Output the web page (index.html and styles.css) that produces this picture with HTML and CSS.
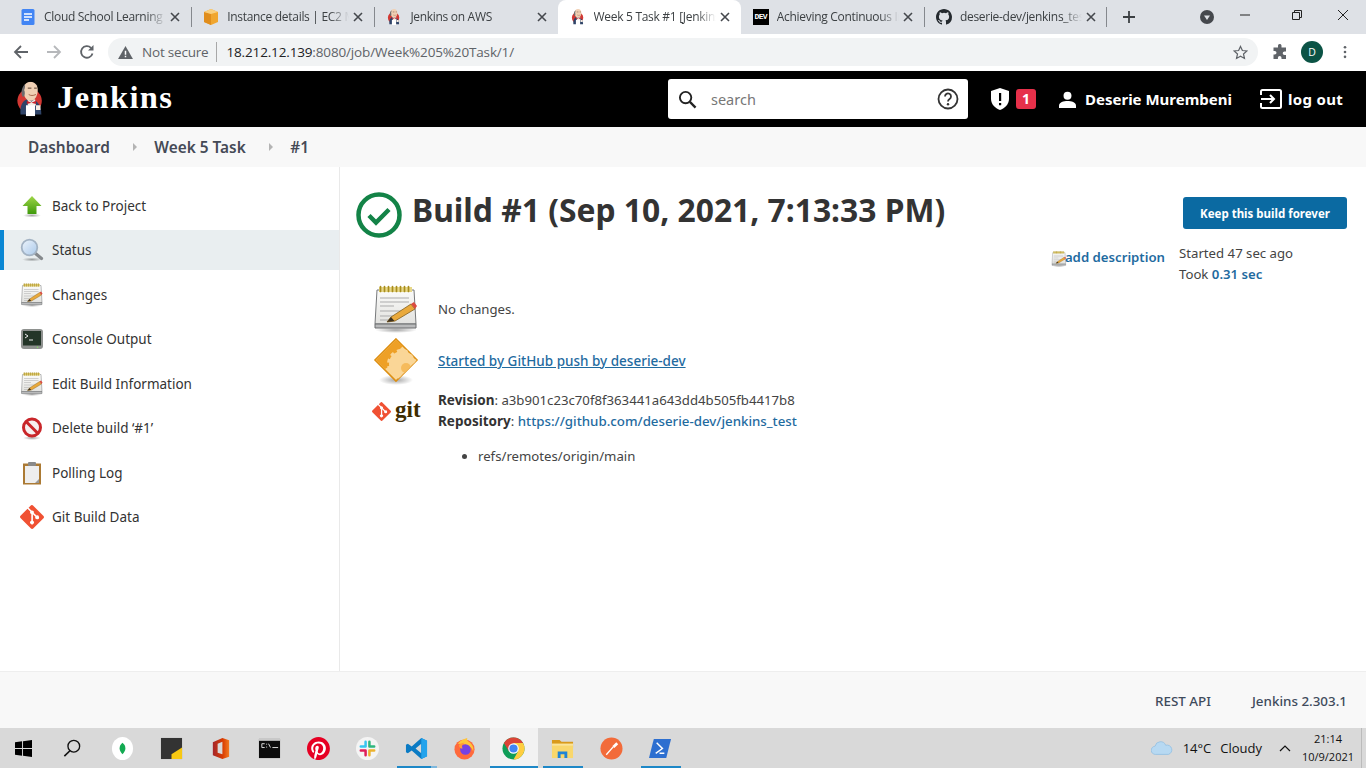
FILE: index.html
```html
<!DOCTYPE html>
<html lang="en">
<head>
<meta charset="utf-8">
<title>Week 5 Task #1 [Jenkins]</title>
<link rel="stylesheet" href="styles.css">
</head>
<body>
<svg class="defs" width="0" height="0" aria-hidden="true">
  <defs>
    <linearGradient id="paper" x1="0" y1="0" x2="0" y2="1"><stop offset="0" stop-color="#fbfbfa"/><stop offset="1" stop-color="#e2e2df"/></linearGradient>
    <linearGradient id="arrow" x1="0" y1="0" x2="0" y2="1"><stop offset="0" stop-color="#9fd648"/><stop offset="1" stop-color="#3f9a0c"/></linearGradient>
    <linearGradient id="lens" x1="0" y1="0" x2="1" y2="1"><stop offset="0" stop-color="#eef5fc"/><stop offset="1" stop-color="#a9c8ea"/></linearGradient>
    <linearGradient id="office" x1="0" y1="0" x2="1" y2="0"><stop offset="0" stop-color="#a4262c"/><stop offset=".6" stop-color="#d83b01"/><stop offset="1" stop-color="#f27a21"/></linearGradient>
    <radialGradient id="shade"><stop offset="0" stop-color="#000" stop-opacity=".35"/><stop offset="1" stop-color="#000" stop-opacity="0"/></radialGradient>
    <clipPath id="dia"><path d="M24 2l21 21-21 21L3 23z"/></clipPath>
    <symbol id="butler" viewBox="0 0 32 38">
      <circle cx="15" cy="21" r="13.500" fill="#d33833"/>
      <path d="M5 36c-1-9 2-17 10-17s13 7 13 17z" fill="#2f4468"/>
      <path d="M13 19l4 3 4-3 1 7-5 3-4-3z" fill="#f4efe6"/>
      <path d="M12 21l5 2 5-2v3.500l-5-1.500-5 1.500z" fill="#c8202a"/>
      <path d="M8 9c0-5 3-9 8-9s8 4 8 9c0 6-3 12-8 12s-8-6-8-12z" fill="#f0d0b4"/>
      <path d="M7 16C5 11 7 5 10 3c0 3 0 4-1 6 1 2 1 5 0 7-1 1-1 1-2 0z" fill="#6d6b6d"/>
      <path d="M13 7h4M20 7h3" stroke="#5a4030" stroke-width="1.100"/>
      <path d="M14 14c2 1.500 5 1.500 8 0" stroke="#a86a50" stroke-width="1.100" fill="none"/>
      <path d="M11 26h10v12H11z" fill="#fff"/>
      <path d="M22 26h5v5h-5z" fill="#f6ede2"/>
    </symbol>
    <symbol id="notepad" viewBox="0 0 48 48">
      <ellipse cx="24" cy="45" rx="21" ry="3" fill="url(#shade)"/>
      <path d="M5 5h37l2 34H3z" fill="url(#paper)" stroke="#77797b"/>
      <path d="M3 39h41v4H3z" fill="#b9babb" stroke="#6b6d6f"/>
      <path d="M7 2h33v5H7z" fill="#e8d888"/>
      <path d="M8.500 1.500v5M12.500 1.500v5M16.500 1.500v5M20.500 1.500v5M24.500 1.500v5M28.500 1.500v5M32.500 1.500v5M36.500 1.500v5" stroke="#a88d1e" stroke-width="1.700" stroke-linecap="round"/>
      <path d="M8 13h29M8 17h29M8 21h14M8 26h24M8 31h17M8 35h10" stroke="#ababab"/>
      <path d="M15 37l4-5 20-13 4 5-20 12z" fill="#e9a93c" stroke="#82601f" stroke-width=".8"/>
      <path d="M39 19l3-2 3 4-2 3z" fill="#dc4b40"/>
      <path d="M15 37l4-5 3.500 4z" fill="#3f3320"/>
    </symbol>
    <symbol id="gitmark" viewBox="0 0 24 24">
      <path d="M23.500 11 13 .5a1.600 1.600 0 0 0-2.200 0L8.600 2.700l2.800 2.800a1.900 1.900 0 0 1 2.400 2.400l2.700 2.700a1.900 1.900 0 1 1-1.100 1.100L12.900 9.200v6.600a1.900 1.900 0 1 1-1.600-.1V9a1.900 1.900 0 0 1-1-2.500L7.500 3.800.5 10.800a1.600 1.600 0 0 0 0 2.200L11 23.500a1.600 1.600 0 0 0 2.200 0l10.300-10.300a1.600 1.600 0 0 0 0-2.200z" fill="#f05133"/>
    </symbol>
    <symbol id="close" viewBox="0 0 10 10">
      <path d="M1 1l8 8M9 1l-8 8" stroke="#45484d" stroke-width="1.600" fill="none"/>
    </symbol>
  </defs>
</svg>

<div class="tabstrip">
  <div class="tab">
    <svg class="favicon" viewBox="0 0 16 16"><rect x="1.500" width="13" height="16" rx="1.500" fill="#4285f4"/><path d="M4 5h8M4 8h8M4 11h5" stroke="#fff" stroke-width="1.300"/></svg>
    <span class="tab-title">Cloud School Learning Management</span>
    <svg class="tab-x"><use href="#close"/></svg>
  </div>
  <div class="tab sep">
    <svg class="favicon" viewBox="0 0 16 16"><path d="M8 0l7 3v10l-7 3-7-3V3z" fill="#f0a62f"/><path d="M8 5L1 3v10l7 3z" fill="#e08d1c"/><path d="M8 5l7-2-7-3-7 3z" fill="#f9cf7e"/></svg>
    <span class="tab-title">Instance details | EC2 Management Console</span>
    <svg class="tab-x"><use href="#close"/></svg>
  </div>
  <div class="tab sep">
    <svg class="favicon" viewBox="0 0 32 38"><use href="#butler"/></svg>
    <span class="tab-title">Jenkins on AWS</span>
    <svg class="tab-x"><use href="#close"/></svg>
  </div>
  <div class="tab active">
    <svg class="favicon" viewBox="0 0 32 38"><use href="#butler"/></svg>
    <span class="tab-title">Week 5 Task #1 [Jenkins]</span>
    <svg class="tab-x"><use href="#close"/></svg>
  </div>
  <div class="tab">
    <span class="favicon dev-icon">DEV</span>
    <span class="tab-title">Achieving Continuous Integration</span>
    <svg class="tab-x"><use href="#close"/></svg>
  </div>
  <div class="tab sep sep-end">
    <svg class="favicon" viewBox="0 0 16 16"><path fill="#24292e" d="M8 0C3.580 0 0 3.580 0 8c0 3.540 2.290 6.530 5.470 7.590.4.070.55-.17.55-.38 0-.19-.01-.82-.01-1.490-2.010.37-2.530-.49-2.690-.94-.09-.23-.48-.94-.82-1.130-.28-.15-.68-.52-.01-.53.63-.01 1.080.58 1.230.82.72 1.210 1.870.87 2.330.66.070-.52.280-.87.510-1.070-1.780-.2-3.640-.89-3.640-3.950 0-.87.310-1.590.820-2.150-.080-.2-.360-1.020.080-2.120 0 0 .670-.21 2.200.82a7.400 7.400 0 0 1 4 0c1.530-1.040 2.200-.82 2.200-.82.440 1.100.160 1.920.080 2.120.510.560.820 1.270.820 2.150 0 3.070-1.870 3.750-3.650 3.950.290.250.540.730.540 1.480 0 1.070-.010 1.930-.010 2.200 0 .210.150.460.550.380A8.010 8.010 0 0 0 16 8c0-4.420-3.580-8-8-8z"/></svg>
    <span class="tab-title">deserie-dev/jenkins_test</span>
    <svg class="tab-x"><use href="#close"/></svg>
  </div>
  <svg class="newtab" viewBox="0 0 14 14"><path d="M7 1v12M1 7h12" stroke="#3c4043" stroke-width="1.800"/></svg>
  <div class="strip-spacer"></div>
  <svg class="profile-dot" viewBox="0 0 16 16"><circle cx="8" cy="8" r="7" fill="#45484d"/><path d="M5 6.500h6L8 11z" fill="#dee1e6"/></svg>
  <div class="winctl">
    <svg viewBox="0 0 12 12"><path d="M1 6h10" stroke="#222"/></svg>
    <svg viewBox="0 0 12 12"><path d="M1.500 3.500h7v7h-7zM3.500 3.500v-2h7v7h-2" fill="none" stroke="#222"/></svg>
    <svg viewBox="0 0 12 12"><path d="M1 1l10 10M11 1L1 11" stroke="#222"/></svg>
  </div>
</div>

<div class="toolbar">
  <svg class="nav-ic" viewBox="0 0 16 16"><path d="M15 8H2M8 2L2 8l6 6" fill="none" stroke="#5f6368" stroke-width="1.800"/></svg>
  <svg class="nav-ic" viewBox="0 0 16 16"><path d="M1 8h13M8 2l6 6-6 6" fill="none" stroke="#b6b8bb" stroke-width="1.800"/></svg>
  <svg class="nav-ic" viewBox="0 0 16 16"><path d="M13.500 9.500A5.800 5.800 0 1 1 12 3.800" fill="none" stroke="#5f6368" stroke-width="1.800"/><path d="M14.500 1v5.500H9z" fill="#5f6368"/></svg>
  <div class="omnibox">
    <svg class="warn" viewBox="0 0 16 14"><path d="M8 0l8 14H0z" fill="#5f6368"/><path d="M7.200 5h1.600v4.500H7.200zM7.200 10.500h1.600V12H7.200z" fill="#fff"/></svg>
    <span class="not-secure">Not secure</span>
    <span class="url"><b class="host">18.212.12.139</b>:8080/job/Week%205%20Task/1/</span>
    <svg class="star" viewBox="0 0 16 16"><path d="M8 1.500l2 4.400 4.800.5-3.600 3.200 1 4.700L8 11.900l-4.200 2.400 1-4.700L1.200 6.400 6 5.900z" fill="none" stroke="#5f6368" stroke-width="1.300"/></svg>
  </div>
  <svg class="ext" viewBox="0 0 16 16"><path d="M6 1.500a1.800 1.800 0 0 1 3.500 0V3.500H14v4h-1.500a1.800 1.800 0 0 0 0 3.600H14V15H9.500v-1.200a1.800 1.800 0 0 0-3.600 0V15H1.500v-4.500h1.200a1.800 1.800 0 0 0 0-3.600H1.500V3.500H6z" fill="#5f6368"/></svg>
  <span class="avatar">D</span>
  <svg class="kebab" viewBox="0 0 4 16"><circle cx="2" cy="2.500" r="1.500" fill="#5f6368"/><circle cx="2" cy="8" r="1.500" fill="#5f6368"/><circle cx="2" cy="13.500" r="1.500" fill="#5f6368"/></svg>
</div>

<header class="jk-header">
  <svg class="jk-logo" viewBox="0 0 32 38"><use href="#butler"/></svg>
  <span class="jk-name">Jenkins</span>
  <div class="jk-search">
    <svg class="search-ic" viewBox="0 0 20 20"><circle cx="8" cy="8" r="6" fill="none" stroke="#222" stroke-width="2"/><path d="M12.500 12.500L18.500 18.500" stroke="#222" stroke-width="2.400"/></svg>
    <span class="search-text">search</span>
    <svg class="help-ic" viewBox="0 0 22 22"><circle cx="11" cy="11" r="9.500" fill="none" stroke="#333" stroke-width="1.800"/><path d="M8 8.500a3 3 0 1 1 4.600 2.500c-1 .7-1.600 1.200-1.600 2.500" fill="none" stroke="#333" stroke-width="1.800"/><circle cx="11" cy="16.200" r="1.200" fill="#333"/></svg>
  </div>
  <svg class="shield" viewBox="0 0 18 22"><path d="M9 0l9 3v8c0 5-4 9-9 11-5-2-9-6-9-11V3z" fill="#fff"/><path d="M8 5h2.200v8H8zM8 15h2.200v2.200H8z" fill="#000"/></svg>
  <span class="badge">1</span>
  <svg class="user-ic" viewBox="0 0 18 18"><circle cx="9" cy="5" r="4.200" fill="#fff"/><path d="M0 18v-2.500C0 12 5 10.500 9 10.500s9 1.500 9 5V18z" fill="#fff"/></svg>
  <span class="jk-link user-name">Deserie Murembeni</span>
  <svg class="logout-ic" viewBox="0 0 22 20"><path d="M1 6V2.500A1.500 1.500 0 0 1 2.500 1h17A1.500 1.500 0 0 1 21 2.500v15a1.500 1.500 0 0 1-1.500 1.500h-17A1.500 1.500 0 0 1 1 17.500V14" fill="none" stroke="#fff" stroke-width="2"/><path d="M1 10h12M10 6l4 4-4 4" fill="none" stroke="#fff" stroke-width="2"/></svg>
  <span class="jk-link logout-text">log out</span>
</header>

<nav class="crumbs">
  <span class="crumb">Dashboard</span>
  <svg class="crumb-arrow" viewBox="0 0 4 8"><path d="M0 0l4 4-4 4z"/></svg>
  <span class="crumb">Week 5 Task</span>
  <svg class="crumb-arrow" viewBox="0 0 4 8"><path d="M0 0l4 4-4 4z"/></svg>
  <span class="crumb">#1</span>
</nav>

<div class="page">
  <aside class="sidebar">
    <a class="task">
      <svg class="task-ic" viewBox="0 0 24 24"><ellipse cx="12" cy="21.500" rx="9" ry="2" fill="url(#shade)"/><path d="M12 2l9.500 10H16.500v8h-9v-8H2.500z" fill="url(#arrow)"/></svg>
      <span>Back to Project</span>
    </a>
    <a class="task current">
      <svg class="task-ic" viewBox="0 0 24 24"><ellipse cx="12" cy="21.500" rx="10" ry="2" fill="url(#shade)"/><path d="M15.500 15.500l6 5" stroke="#85898d" stroke-width="3.200" stroke-linecap="round"/><circle cx="9.500" cy="9.500" r="7.800" fill="url(#lens)" stroke="#a3b3c4" stroke-width="1.800"/></svg>
      <span>Status</span>
    </a>
    <a class="task">
      <svg class="task-ic"><use href="#notepad"/></svg>
      <span>Changes</span>
    </a>
    <a class="task">
      <svg class="task-ic" viewBox="0 0 24 24"><rect x="1" y="2" width="22" height="20" rx="3" fill="#8e918f"/><rect x="3" y="4" width="18" height="14.500" fill="#233528"/><path d="M5 7l3 2-3 2" stroke="#eee" fill="none"/><path d="M9 13h4" stroke="#eee"/><circle cx="17.500" cy="20.300" r=".7" fill="#7fe05c"/></svg>
      <span>Console Output</span>
    </a>
    <a class="task">
      <svg class="task-ic"><use href="#notepad"/></svg>
      <span>Edit Build Information</span>
    </a>
    <a class="task">
      <svg class="task-ic" viewBox="0 0 24 24"><ellipse cx="12" cy="22" rx="9" ry="2" fill="url(#shade)"/><circle cx="12" cy="11.500" r="8.500" fill="#f6f0f0" stroke="#c9262a" stroke-width="3"/><path d="M6 5.500l12 12" stroke="#c9262a" stroke-width="3"/></svg>
      <span>Delete build ‘#1’</span>
    </a>
    <a class="task">
      <svg class="task-ic" viewBox="0 0 24 24"><rect x="3" y="2.500" width="18" height="21" fill="#ab7a34"/><rect x="5" y="5" width="14" height="17" fill="#eeeeee"/><rect x="8" y="1" width="8" height="4" rx="1" fill="#8a8a8a"/><path d="M15 22l4-4v4z" fill="#9a9a9a"/></svg>
      <span>Polling Log</span>
    </a>
    <a class="task">
      <svg class="task-ic"><use href="#gitmark"/></svg>
      <span>Git Build Data</span>
    </a>
  </aside>

  <main class="content">
    <div class="title-row">
      <svg class="status-ic" viewBox="0 0 46 46"><circle cx="23" cy="23" r="20.500" fill="none" stroke="#138347" stroke-width="4.500"/><path d="M13 23.500l7 7 13-13" fill="none" stroke="#138347" stroke-width="4.500"/></svg>
      <h1 class="build-title">Build #1 (Sep 10, 2021, 7:13:33 PM)</h1>
      <button class="keep-btn">Keep this build forever</button>
    </div>
    <div class="meta-row">
      <div class="add-desc">
        <svg class="add-ic"><use href="#notepad"/></svg>
        <a class="link-strong">add description</a>
      </div>
      <div class="times">
        <div>Started 47 sec ago</div>
        <div>Took <a class="link-strong">0.31 sec</a></div>
      </div>
    </div>
    <div class="info-row">
      <svg class="info-ic"><use href="#notepad"/></svg>
      <span>No changes.</span>
    </div>
    <div class="info-row">
      <svg class="info-ic" viewBox="0 0 48 48"><ellipse cx="24" cy="43" rx="17" ry="5" fill="url(#shade)"/><path d="M24 2l21 21-21 21L3 23z" fill="#fad697" stroke="#dd8f12" stroke-width="1.600"/><g clip-path="url(#dia)"><path d="M24 3L4 23l9 9 10-6 4-13 4-4z" fill="#eea026"/><circle cx="30" cy="27" r="13" fill="#fad697" stroke="#fad697" stroke-width="4" stroke-dasharray="3.500 3.500"/><circle cx="34" cy="31" r="5" fill="#f6bb5c"/></g></svg>
      <a class="link-under">Started by GitHub push by deserie-dev</a>
    </div>
    <div class="git-row">
      <div class="git-logo">
        <svg class="git-mark"><use href="#gitmark"/></svg>
        <span class="git-word">git</span>
      </div>
      <div class="git-lines">
        <div><b class="label">Revision</b>: a3b901c23c70f8f363441a643dd4b505fb4417b8</div>
        <div><b class="label">Repository</b>: <a class="link-plain">https://github.com/deserie-dev/jenkins_test</a></div>
        <ul class="refs"><li>refs/remotes/origin/main</li></ul>
      </div>
    </div>
  </main>
</div>

<footer class="jk-footer">
  <a>REST API</a>
  <a>Jenkins 2.303.1</a>
</footer>

<div class="taskbar">
  <div class="tb-item nudge"><svg viewBox="0 0 18 18"><path d="M0 2.500L7.500 1.400V8.500H0zM8.500 1.300L18 0v8.500H8.500zM0 9.500h7.500v7.100L0 15.500zM8.500 9.500H18V18l-9.500-1.300z" fill="#000"/></svg></div>
  <div class="tb-item nudge"><svg class="tb-search" viewBox="0 0 20 20"><circle cx="12" cy="8" r="6.500" fill="none" stroke="#111" stroke-width="1.500"/><path d="M8 12.800L1.500 19" stroke="#111" stroke-width="1.800"/></svg></div>
  <div class="tb-item"><svg viewBox="0 0 24 24"><ellipse cx="12" cy="12" rx="11" ry="12" fill="#fff"/><path d="M12 6c2.500 2 3 4 3 6s-1 4-3 6c-2-2-3-4-3-6s.5-4 3-6z" fill="#13aa52"/></svg></div>
  <div class="tb-item"><svg viewBox="0 0 24 24"><rect x="1" y="1" width="22" height="22" fill="#333"/><path d="M12 23V18l11-7v12z" fill="#f7c812"/></svg></div>
  <div class="tb-item"><svg viewBox="0 0 24 24"><path fill-rule="evenodd" d="M14 1l7 2.500v17L14 23 4 19V5.500zM14 5L9 7v9.500l5 1.500z" fill="url(#office)"/></svg></div>
  <div class="tb-item"><svg viewBox="0 0 24 24"><rect x="1" y="2" width="22" height="20" fill="#0c0c0c"/><rect x="1" y="2" width="22" height="2" fill="#c9c9c9"/><path d="M4 7h3M4 7v4h3M9 7v1M9 10v1M11 7l2 4M15 11h6" stroke="#ddd" fill="none"/></svg></div>
  <div class="tb-item"><svg viewBox="0 0 24 24"><circle cx="12" cy="12" r="11" fill="#fff"/><path fill="#e60023" d="M12 0C5.400 0 0 5.400 0 12c0 5.100 3.200 9.400 7.600 11.200-.1-.9-.2-2.400 0-3.400.2-.9 1.400-5.900 1.400-5.900s-.4-.7-.4-1.800c0-1.700 1-2.900 2.200-2.900 1 0 1.500.8 1.500 1.700 0 1-.7 2.600-1 4-.3 1.200.6 2.200 1.800 2.200 2.100 0 3.800-2.200 3.800-5.500 0-2.900-2.100-4.900-5-4.900-3.400 0-5.400 2.600-5.400 5.200 0 1 .4 2.100.9 2.700.1.100.1.200.1.300-.1.400-.3 1.200-.3 1.400-.1.200-.2.300-.4.200-1.500-.7-2.400-2.900-2.400-4.600 0-3.800 2.800-7.300 7.900-7.300 4.200 0 7.400 3 7.400 6.900 0 4.100-2.600 7.500-6.200 7.500-1.200 0-2.400-.6-2.800-1.400l-.8 2.900c-.3 1-1 2.300-1.500 3.100 1.100.3 2.300.5 3.500.5 6.600 0 12-5.400 12-12S18.600 0 12 0z"/></svg></div>
  <div class="tb-item"><svg viewBox="0 0 24 24"><circle cx="12" cy="12" r="12" fill="#f4f4f4"/><path d="M10 5v5M5 10h5" stroke="#36c5f0" stroke-width="2.600" stroke-linecap="round"/><path d="M14 5v5M14 10h5" stroke="#2eb67d" stroke-width="2.600" stroke-linecap="round"/><path d="M5 14h5M10 14v5" stroke="#e01e5a" stroke-width="2.600" stroke-linecap="round"/><path d="M14 14h5M14 14v5" stroke="#ecb22e" stroke-width="2.600" stroke-linecap="round"/></svg></div>
  <div class="tb-item run run-group"><svg viewBox="0 0 24 24"><path fill-rule="evenodd" d="M17 1l6 3v16l-6 3L7 14l-4 3-2-1V8l2-1 4 3zM17 7l-6 5 6 5z" fill="#0a7bc4"/><path d="M17 1l6 3v16l-6 3z" fill="#23a3ec"/></svg></div>
  <div class="tb-item pull"><svg viewBox="0 0 24 24"><circle cx="12" cy="13" r="10.500" fill="#ff6a3d"/><path d="M5 7c3-4 7-5 10-6-1 2 0 3 3 5 3 3 4 6 3 9-1-4-5-8-16-8z" fill="#ffc53a"/><circle cx="13" cy="13" r="5.500" fill="#7542e5"/><path d="M6 9c1-2 3-3 6-3-3 2-3 4-2 6-2 0-3-1-4-3z" fill="#ff9a3c"/></svg></div>
  <div class="tb-item run active-app"><svg viewBox="0 0 24 24"><circle cx="12" cy="12" r="11.500" fill="#0f9d58"/><path d="M2.040 6.250A11.500 11.500 0 0 1 21.960 6.250H12L7.200 14.800z" fill="#db4437"/><path d="M21.960 6.250A11.500 11.500 0 0 1 12 23.500l4.800-8.700L12 6.250z" fill="#ffcd40"/><circle cx="12" cy="12" r="5.500" fill="#fff"/><circle cx="12" cy="12" r="4.300" fill="#4285f4"/></svg></div>
  <div class="tb-item run"><svg viewBox="0 0 24 24"><path d="M1 3h8l2 2h12v6H1z" fill="#d99a1c"/><path d="M1 7h22v15H1z" fill="#f9d76c"/><path d="M7 15h10v7h-3v-4h-4v4H7z" fill="#1f84d6"/><path d="M1 7h22v2H1z" fill="#fbe49a"/></svg></div>
  <div class="tb-item"><svg viewBox="0 0 24 24"><circle cx="12" cy="12" r="11.500" fill="#f26b3a"/><path d="M6.500 18.500L14 10" stroke="#fff" stroke-width="1.400"/><path d="M13 9.500l4-4 2 2-4 4z" fill="#fff"/></svg></div>
  <div class="tb-item run"><svg viewBox="0 0 24 24"><path d="M5 2h18l-5 20H0z" fill="#2d6fd0"/><path d="M8 6l6 6-7 5M11 17h5" fill="none" stroke="#fff" stroke-width="1.500"/></svg></div>
  <div class="tb-spacer"></div>
  <svg class="weather" viewBox="0 0 24 16"><path d="M5 15a4.500 4.500 0 0 1-.5-9A6 6 0 0 1 16 5a4.800 4.800 0 0 1 3 10z" fill="#b7d9f2" stroke="#8dbde2" stroke-width=".8"/></svg>
  <span class="tb-weather">14°C</span>
  <span class="tb-weather tb-cloudy">Cloudy</span>
  <svg class="chev" viewBox="0 0 12 7"><path d="M1 6l5-5 5 5" fill="none" stroke="#111" stroke-width="1.200"/></svg>
  <div class="clock"><div>21:14</div><div>10/9/2021</div></div>
  <div class="tb-desktop"></div>
</div>
</body>
</html>
```

FILE: styles.css
```css
* { box-sizing: border-box; }
html, body { margin: 0; padding: 0; }
body {
  width: 1366px;
  height: 768px;
  overflow: hidden;
  display: flex;
  flex-direction: column;
  font-family: "Noto Sans", "Open Sans", sans-serif;
  font-size: 13.200px;
  color: #333;
  background: #fff;
}
.defs { position: absolute; }
svg { display: block; flex: none; }

/* Browser chrome */
.tabstrip {
  height: 34px;
  flex: none;
  display: flex;
  align-items: center;
  padding-left: 8px;
  background: #dee1e6;
  font-family: "Open Sans", sans-serif;
}
.tab {
  width: 183.200px;
  height: 34px;
  display: flex;
  align-items: center;
  padding: 0 11px 0 12px;
  position: relative;
}
.tab.sep::before {
  content: "";
  position: absolute;
  left: 0;
  top: 7px;
  height: 20px;
  border-left: 1px solid #85888d;
}
.tab.sep-end::after {
  content: "";
  position: absolute;
  right: 0;
  top: 7px;
  height: 20px;
  border-left: 1px solid #85888d;
}
.tab.active {
  background: #fff;
  border-radius: 8px 8px 0 0;
}
.favicon { width: 16px; height: 16px; flex: none; }
.dev-icon {
  background: #000;
  color: #fff;
  font: bold 8px/16px "Liberation Mono", monospace;
  text-align: center;
  letter-spacing: -0.6px;
}
.tab-title {
  flex: 1;
  min-width: 0;
  margin-left: 8px;
  font-size: 12px;
  line-height: 16px;
  padding-bottom: 1px;
  letter-spacing: -0.3px;
  color: #3c4043;
  white-space: nowrap;
  overflow: hidden;
  -webkit-mask-image: linear-gradient(to right, #000 84%, transparent);
  mask-image: linear-gradient(to right, #000 84%, transparent);
}
.tab-x { width: 10px; height: 10px; margin-left: 4px; }
.newtab { width: 14px; height: 14px; margin-left: 15px; }
.strip-spacer { flex: 1; }
.profile-dot { width: 16px; height: 16px; margin-right: 24px; }
.winctl { display: flex; align-items: center; gap: 34px; padding-right: 17px; margin-top: -4px; }
.winctl svg { width: 12px; height: 12px; }
.winctl svg:first-child { margin-right: 6px; }

.toolbar {
  height: 37px;
  flex: none;
  display: flex;
  align-items: center;
  padding-left: 13px;
  background: #fff;
  border-bottom: 1px solid #fff;
  font-family: "Open Sans", sans-serif;
}
.nav-ic { width: 16px; height: 16px; margin-right: 17px; }
.nav-ic:nth-child(3) { margin-right: 14px; }
.omnibox {
  width: 1150px;
  height: 28px;
  display: flex;
  align-items: center;
  padding: 0 10px;
  margin-left: -1px;
  border-radius: 14px;
  background: #f1f3f4;
  font-size: 13.500px;
}
.warn { width: 15px; height: 13px; margin-right: 9px; }
.not-secure {
  padding-right: 8px;
  border-right: 1px solid #a8a8a8;
  color: #5f6368;
  letter-spacing: -0.2px;
  line-height: 20px;
}
.url { margin-left: 9px; color: #5f6368; letter-spacing: -0.15px; }
.host { font-weight: 400; color: #202124; }
.star { width: 15px; height: 15px; margin-left: auto; }
.ext { width: 16px; height: 16px; margin-left: 14px; }
.avatar {
  width: 22px;
  height: 22px;
  margin-left: 13px;
  border-radius: 50%;
  background: #0b5345;
  color: #fff;
  font-size: 10.500px;
  line-height: 22px;
  text-align: center;
}
.kebab { width: 4px; height: 14px; margin-left: 20px; }

/* Jenkins header */
.jk-header {
  height: 56px;
  flex: none;
  display: flex;
  align-items: center;
  padding: 0 23px 0 16px;
  background: #000;
  color: #fff;
}
.jk-logo { width: 29px; height: 38px; }
.jk-name {
  margin-left: 12px;
  margin-right: auto;
  margin-bottom: 3px;
  font: bold 32.500px/1 "Liberation Serif", serif;
  letter-spacing: 1.400px;
}
.jk-search {
  width: 300px;
  height: 40px;
  display: flex;
  align-items: center;
  padding: 0 9px 0 10px;
  background: #fff;
  border-radius: 3px;
}
.search-ic { width: 19px; height: 19px; }
.search-text { margin-left: 14px; font-size: 14.500px; color: #777; }
.help-ic { width: 22px; height: 22px; margin-left: auto; }
.shield { width: 18px; height: 22px; margin-left: 23px; }
.badge {
  width: 20px;
  height: 20px;
  margin-left: 7px;
  border-radius: 3px;
  background: #e6304a;
  font-weight: 700;
  font-size: 14px;
  line-height: 20px;
  text-align: center;
}
.user-ic { width: 17px; height: 17px; margin-left: 23px; }
.jk-link { font-weight: 700; font-size: 15px; }
.user-name { margin-left: 9px; }
.logout-ic { width: 22px; height: 20px; margin-left: 28px; margin-right: 6px; }
.logout-text { letter-spacing: .3px; }

/* Breadcrumbs */
.crumbs {
  height: 40px;
  flex: none;
  display: flex;
  align-items: center;
  padding-left: 28px;
  background: #f8f8f8;
  font-size: 15.400px;
  font-weight: 600;
  color: #454a56;
}
.crumb-arrow { width: 4px; height: 8px; margin: 0 17px 0 23.500px; fill: #b4b4b4; }

/* Main */
.page { flex: 1; min-height: 0; display: flex; }
.sidebar {
  width: 340px;
  flex: none;
  display: flex;
  flex-direction: column;
  gap: 4.500px;
  padding-top: 18.750px;
  border-right: 1px solid #e9e9e9;
}
.task {
  height: 40px;
  flex: none;
  display: flex;
  align-items: center;
  padding-left: 20px;
  font-size: 13.500px;
  color: #333;
}
.task span { margin-left: 8px; }
.task.current {
  background: #e9eef0;
  box-shadow: inset 4px 0 0 #0b87d4;
}
.task-ic { width: 24px; height: 24px; }

.content { flex: 1; min-width: 0; padding: 25px 19px 0 16px; }
.title-row { display: flex; align-items: center; height: 46px; }
.status-ic { width: 46px; height: 46px; }
.build-title {
  margin: 0 0 11px 10px;
  font-size: 31.800px;
  font-weight: 700;
  color: #333;
  line-height: 40px;
  white-space: nowrap;
}
.keep-btn {
  width: 164px;
  height: 32px;
  margin-left: auto;
  margin-bottom: 4px;
  border: 0;
  border-radius: 3px;
  background: #0b6aa2;
  color: #fff;
  font: 700 11.500px "Noto Sans", sans-serif;
}
.meta-row {
  height: 42px;
  margin-top: 5px;
  display: flex;
  justify-content: flex-end;
  line-height: 21px;
  color: #444;
}
.add-desc { display: flex; align-items: flex-start; margin-right: 14px; padding-top: 4px; }
.add-ic { width: 16px; height: 16px; margin-top: 4px; margin-right: -2px; }
.link-strong { font-weight: 600; color: #1f6b9f; }
.times { width: 168px; }

.info-row {
  height: 48px;
  margin-bottom: 4px;
  margin-left: 16px;
  display: flex;
  align-items: center;
  gap: 18px;
  color: #444;
}
.info-ic { width: 48px; height: 48px; }
.link-under { color: #1f6b9f; text-decoration: underline; font-weight: 500; font-size: 13.500px; }
.git-row {
  margin-left: 16px;
  display: flex;
  gap: 18px;
  padding-top: 1px;
  line-height: 21px;
  color: #444;
}
.git-logo { width: 48px; height: 42px; display: flex; align-items: center; gap: 4px; }
.git-mark { width: 19px; height: 19px; }
.git-word {
  font: bold 23px/1 "Liberation Serif", serif;
  color: #3e2c00;
  margin-top: -3px;
}
.label { font-weight: 700; color: #333; font-size: 13.500px; }
.link-plain { color: #1f6b9f; font-weight: 500; font-size: 13.300px; }
.refs { margin: 14px 0 0; padding-left: 40px; }

/* Footer */
.jk-footer {
  height: 57px;
  flex: none;
  display: flex;
  justify-content: flex-end;
  align-items: center;
  gap: 41px;
  padding-right: 19px;
  padding-top: 1px;
  background: #f8f8f8;
  border-top: 1px solid #eee;
  font-size: 13.400px;
  font-weight: 500;
  color: #3f4b5c;
}

/* Windows taskbar */
.taskbar {
  height: 40px;
  flex: none;
  display: flex;
  align-items: center;
  background: #d9d9d9;
  font-family: "Open Sans", sans-serif;
  color: #111;
}
.tb-item {
  width: 49px;
  height: 40px;
  display: flex;
  align-items: center;
  justify-content: center;
}
.tb-item svg { width: 23px; height: 23px; }
.tb-item:first-child svg { width: 17px; height: 17px; }
.tb-item .tb-search { width: 18px; height: 18px; }
.tb-item.nudge { padding-right: 3px; }
.tb-item.pull { margin-left: -1px; }
.tb-item.run {
  background: linear-gradient(#1e88c7, #1e88c7) center bottom / 40px 2px no-repeat;
}
.tb-item.run-group {
  background: linear-gradient(to right, #1e88c7 34px, #7fb8dd 34px) center bottom / 40px 2px no-repeat;
}
.tb-item.active-app {
  width: 48px;
  margin-left: 1px;
  padding-right: 1px;
  background: linear-gradient(#1e88c7, #1e88c7) center bottom / 100% 2px no-repeat, #f2f2f2;
}
.tb-spacer { flex: 1; }
.weather { width: 22px; height: 16px; margin-right: 10px; }
.tb-weather { font-size: 13px; }
.tb-cloudy { margin-left: 9px; }
.chev { width: 12px; height: 7px; margin-left: 17px; }
.clock { width: 60px; margin-left: 7px; margin-right: 3px; font-size: 11px; line-height: 18px; text-align: center; }
.tb-desktop { width: 5px; height: 40px; border-left: 1px solid #bbb; }
```
